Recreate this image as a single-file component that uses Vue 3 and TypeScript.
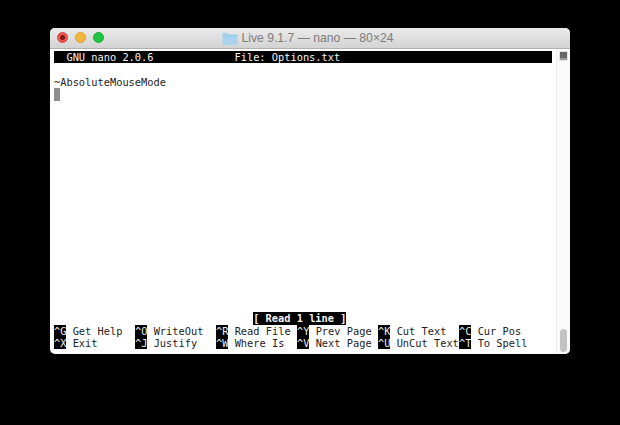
<script setup lang="ts">
const shortcuts: [string, string][][] = [
  [['^G', 'Get Help'], ['^O', 'WriteOut'], ['^R', 'Read File'], ['^Y', 'Prev Page'], ['^K', 'Cut Text'], ['^C', 'Cur Pos']],
  [['^X', 'Exit'], ['^J', 'Justify'], ['^W', 'Where Is'], ['^V', 'Next Page'], ['^U', 'UnCut Text'], ['^T', 'To Spell']],
]
</script>

<template>
  <div class="page">
    <div class="window">
      <header class="titlebar">
        <div class="lights">
          <span class="light red"></span>
          <span class="light yellow"></span>
          <span class="light green"></span>
        </div>
        <div class="title">
          <svg class="folder" width="16" height="13" viewBox="0 0 16 13">
            <path d="M0.5 2 Q0.5 0.8 1.7 0.8 H5.6 L7 2.4 H14.4 Q15.5 2.4 15.5 3.5 V11.6 Q15.5 12.7 14.4 12.7 H1.6 Q0.5 12.7 0.5 11.6 Z" fill="#a9d3ef" />
            <path d="M0.5 3.6 H15.5" stroke="#8fc3e6" stroke-width="0.8" />
          </svg>
          <span>Live 9.1.7 — nano — 80×24</span>
        </div>
      </header>
      <div class="body">
        <div class="terminal">
          <div class="line topbar"><span class="t1">GNU nano 2.0.6</span><span class="t2">File: Options.txt</span></div>
          <div class="line"></div>
          <div class="line">~AbsoluteMouseMode</div>
          <div class="line"><span class="cursor"></span></div>
          <div class="spacer"></div>
          <div class="line status"><span>[ Read 1 line ]</span></div>
          <div v-for="(row, i) in shortcuts" :key="i" class="line keys">
            <div v-for="item in row" :key="item[0]" class="key">
              <span class="cap">{{ item[0] }}</span><span class="label">{{ item[1] }}</span>
            </div>
          </div>
        </div>
        <aside class="scrollbar">
          <span class="split"><i></i></span>
          <span class="thumb"></span>
        </aside>
      </div>
    </div>
  </div>
</template>

<style>
html, body { margin: 0; background: #000; }
</style>

<style scoped>
.page {
  width: 620px;
  height: 425px;
  background: #000;
  padding: 28px 50px 71px;
  box-sizing: border-box;
  overflow: hidden;
}
.window {
  height: 326px;
  display: flex;
  flex-direction: column;
  border-radius: 5px;
  overflow: hidden;
  background: #fff;
}
.titlebar {
  height: 21px;
  flex: none;
  position: relative;
  box-sizing: border-box;
  display: flex;
  align-items: center;
  justify-content: center;
  background: linear-gradient(#ebebeb, #d3d3d3);
  border-bottom: 1px solid #b1b1b1;
}
.lights {
  position: absolute;
  left: 7px;
  top: 4px;
  display: flex;
  gap: 7px;
}
.light {
  width: 11px;
  height: 11px;
  border-radius: 50%;
  box-sizing: border-box;
}
.red { background: radial-gradient(circle, #7c1b18 0 2px, #f6544e 3px); border: 1px solid #d83f3a; }
.yellow { background: #f6b63b; border: 1px solid #dfa023; }
.green { background: #1fc63f; border: 1px solid #1aae34; }
.title {
  display: flex;
  align-items: center;
  gap: 3px;
  margin-left: -4px;
  font: 12.2px "Liberation Sans", Arial, sans-serif;
  color: #7c7c7c;
  white-space: nowrap;
}
.body {
  flex: 1;
  display: flex;
  min-height: 0;
}
.terminal {
  flex: 1;
  padding: 2px 4px 4.6px 4px;
  display: flex;
  flex-direction: column;
  font: 10.34px/12.45px "DejaVu Sans Mono", monospace;
  color: #222;
  min-width: 0;
}
.line {
  height: 12.45px;
  flex: none;
  white-space: pre;
}
.topbar {
  background: #000;
  color: #f4f4f4;
  display: flex;
}
.t1 { margin-left: 12.45px; }
.t2 { margin-left: 81px; }
.cursor {
  display: block;
  width: 6.3px;
  height: 12.45px;
  background: #8e8e8e;
}
.spacer { flex: 1; }
.status {
  padding-left: 199.2px;
  font-weight: 700;
}
.status span {
  background: #000;
  color: #f4f4f4;
  display: inline-block;
}
.keys { display: flex; }
.key { width: 81px; flex: none; white-space: pre; }
.cap { background: #000; color: #eee; display: inline-block; height: 12.45px; }
.label { margin-left: 6.225px; }
.scrollbar {
  width: 14px;
  flex: none;
  position: relative;
  background: #fafafa;
  border-left: 1px solid #ededed;
  box-sizing: border-box;
}
.split {
  position: absolute;
  left: 2px;
  top: 2px;
  width: 9px;
  height: 10px;
  box-sizing: border-box;
  background: #e2e2e2;
  padding: 1px;
}
.split i {
  display: block;
  height: 100%;
  background: #666;
  border-bottom: 2px solid #999;
  box-sizing: border-box;
}
.thumb {
  position: absolute;
  left: 3px;
  bottom: 2px;
  width: 7px;
  height: 23px;
  border-radius: 4px;
  background: #c2c2c2;
}
</style>
